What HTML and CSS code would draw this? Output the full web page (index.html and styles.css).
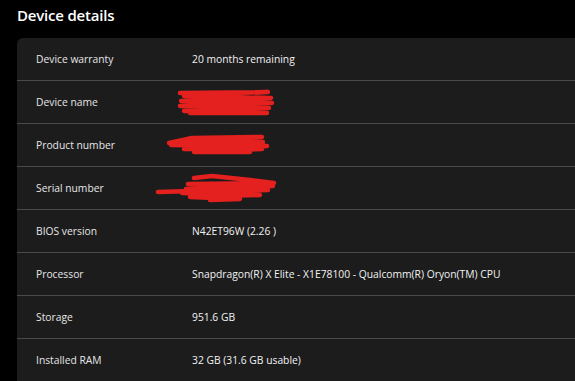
FILE: index.html
```html
<!DOCTYPE html>
<html lang="en">

<head>
    <meta charset="UTF-8">
    <meta name="viewport" content="width=device-width, initial-scale=1.0">
    <title>Device details</title>
    <link rel="stylesheet" href="styles.css">
</head>

<body>

    <h1 class="page-title">Device details</h1>

    <div class="details-card">

        <div class="detail-row">
            <div class="detail-label">Device warranty</div>
            <div class="detail-value">20 months remaining</div>
        </div>

        <div class="detail-row">
            <div class="detail-label">Device name</div>
            <div class="detail-value">
                <svg class="scribble" width="130" height="30" viewBox="0 0 130 30">
                    <path d="M30 6 L118 5 L34 9 L121 11 L31 14 L122 16 L30 19 L119 21 L34 24 L117 26 L40 26" />
                </svg>
            </div>
        </div>

        <div class="detail-row">
            <div class="detail-label">Product number</div>
            <div class="detail-value">
                <svg class="scribble" width="130" height="30" viewBox="0 0 130 30">
                    <path d="M19 13 L42 8 L112 7 L32 11 L113 12 L21 15 L117 16 L34 19 L112 19 L44 22 L100 22" />
                </svg>
            </div>
        </div>

        <div class="detail-row">
            <div class="detail-label">Serial number</div>
            <div class="detail-value">
                <svg class="scribble" width="130" height="30" viewBox="0 0 130 30">
                    <path d="M8 19 L42 18" />
                    <path d="M44 5 L62 3 L100 7 L124 10 L38 11 L123 13 L36 16 L118 17 L32 20 L110 22 L40 24 L90 26 L60 27" />
                </svg>
            </div>
        </div>

        <div class="detail-row">
            <div class="detail-label">BIOS version</div>
            <div class="detail-value">N42ET96W (2.26 )</div>
        </div>

        <div class="detail-row">
            <div class="detail-label">Processor</div>
            <div class="detail-value">Snapdragon(R) X Elite - X1E78100 - Qualcomm(R) Oryon(TM) CPU</div>
        </div>

        <div class="detail-row">
            <div class="detail-label">Storage</div>
            <div class="detail-value">951.6 GB</div>
        </div>

        <div class="detail-row">
            <div class="detail-label">Installed RAM</div>
            <div class="detail-value">32 GB (31.6 GB usable)</div>
        </div>

    </div>

</body>

</html>
```

FILE: styles.css
```css
body {
    background: #000000;
    margin: 0px;
    font-family: "Open Sans", "Noto Sans", Arial, sans-serif;
    color: #ffffff;
    overflow: hidden;
}

.page-title {
    font-size: 15px;
    font-weight: 600;
    letter-spacing: -0.2px;
    line-height: 22px;
    margin: 0px;
    padding: 4px 0 0 17px;
    height: 38px;
    box-sizing: border-box;
}

.details-card {
    margin-left: 17px;
    background: #1c1c1d;
    border-radius: 6px 0 0 0;
}

.detail-row {
    display: grid;
    grid-template-columns: 175px 1fr;
    align-items: center;
    height: 42px;
    border-bottom: 1px solid #4a4a4b;
    font-size: 10.3px;
}

.detail-label {
    padding-left: 19px;
    color: #e6e6e6;
}

.detail-value {
    color: #f2f2f2;
    display: flex;
    align-items: center;
}

.scribble {
    margin-left: -42px;
    fill: none;
    stroke: #e5211f;
    stroke-width: 4.5;
    stroke-linecap: round;
    stroke-linejoin: round;
}
```
